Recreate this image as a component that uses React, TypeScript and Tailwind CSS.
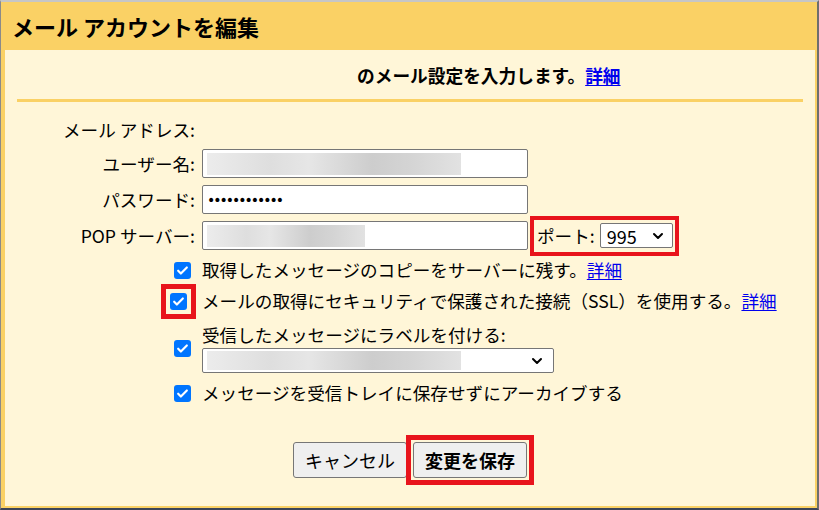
import React from 'react';
import { ChevronDown } from 'lucide-react';

const font = { fontFamily: '"Noto Sans CJK JP", "Noto Sans", sans-serif' };

const Check: React.FC = () => (
    <div className="w-[17px] h-[17px] rounded-[3px] bg-[#0075ff] flex items-center justify-center">
        <svg width="13" height="13" viewBox="0 0 24 24" fill="none" stroke="white" strokeWidth="4" strokeLinecap="round" strokeLinejoin="round">
            <path d="M4 12.5l5 5L20 6.5" />
        </svg>
    </div>
);

const Blur: React.FC<{ w: string; h: string }> = ({ w, h }) => (
    <div className={`${w} ${h} bg-[linear-gradient(90deg,#ececec,#dedede_25%,#e6e6e6_40%,#cdcdcd_65%,#d4d4d4_80%,#e2e2e2)]`} />
);

const Link: React.FC<{ children: React.ReactNode }> = ({ children }) => (
    <a href="#" className="text-[#0000ee] underline underline-offset-2">{children}</a>
);

const FieldRow: React.FC<{ label: React.ReactNode; className?: string; children: React.ReactNode }> = ({ label, className = '', children }) => (
    <div className={`flex items-center ${className}`}>
        <div className="w-[190px] flex justify-end">{label}</div>
        <div className="ml-[7px] flex items-center">{children}</div>
    </div>
);

const Box: React.FC<{ w: string; h?: string; children?: React.ReactNode }> = ({ w, h = 'h-[29px]', children }) => (
    <div className={`${w} ${h} bg-white border border-[#767676] rounded-[2px] flex items-center px-[4px]`}>{children}</div>
);

export default function App() {
    return (
        <div
            className="w-[819px] h-[510px] bg-[#fad165] border-t-2 border-t-[#c6c6c6] border-l border-l-[#8a8a8a] border-r-2 border-r-[#6e6e6e] border-b-2 border-b-[#3c4458] flex flex-col text-black overflow-hidden"
            style={font}
        >
            <header className="h-[48px] flex items-center pl-[11px]">
                <h1 className="text-[22px] font-bold leading-none">メール アカウントを編集</h1>
            </header>
            <div className="flex-1 ml-[4px] mr-[2px] mb-[2px] bg-[#fff6d8] text-[17.6px] leading-[24px]">
                <p className="pt-[13px] pl-[352px] font-bold text-[17.7px]">
                    のメール設定を入力します。<Link>詳細</Link>
                </p>
                <div className="mt-[12px] mx-[12px] h-[3px] bg-[#fad165]" />

                <FieldRow className="mt-[15px] h-[26px]" label={<span>メール アドレス:</span>}>
                    <span />
                </FieldRow>
                <FieldRow className="mt-[6px] h-[29px]" label={<span>ユーザー名:</span>}>
                    <Box w="w-[326px]">
                        <Blur w="w-[254px]" h="h-[22px]" />
                    </Box>
                </FieldRow>
                <FieldRow className="mt-[7px] h-[29px]" label={<span>パスワード:</span>}>
                    <Box w="w-[326px]">
                        <span className="text-[14px] tracking-[-2px] leading-none" style={{ fontFamily: '"DejaVu Sans", sans-serif' }}>••••••••••••</span>
                    </Box>
                </FieldRow>
                <FieldRow className="mt-[7px] h-[29px]" label={<span>POP サーバー:</span>}>
                    <Box w="w-[326px]">
                        <Blur w="w-[158px]" h="h-[22px]" />
                    </Box>
                    <div className="ml-[2px] h-[40px] border-[4px] border-[#e8141c] flex items-center pl-[3px] pr-[2px]">
                        <span>ポート:</span>
                        <div className="ml-[5px] w-[73px] h-[25px] bg-white border border-[#767676] rounded-[2px] flex items-center justify-between pl-[6px] pr-[6px]">
                            <span className="text-[18px]">995</span>
                            <ChevronDown size={16} strokeWidth={3} />
                        </div>
                    </div>
                </FieldRow>

                <FieldRow className="mt-[6px] h-[28px]" label={<div className="mr-[4px]"><Check /></div>}>
                    <span>取得したメッセージのコピーをサーバーに残す。<Link>詳細</Link></span>
                </FieldRow>
                <FieldRow
                    className="mt-[3px] h-[28px]"
                    label={
                        <div className="-mr-[1px] border-[5px] border-[#e8141c] p-[4px]">
                            <Check />
                        </div>
                    }
                >
                    <span className="whitespace-nowrap">メールの取得にセキュリティで保護された接続（SSL）を使用する。<Link>詳細</Link></span>
                </FieldRow>
                <FieldRow className="mt-[8px] h-[50px]" label={<div className="mr-[4px]"><Check /></div>}>
                    <div className="flex flex-col">
                        <span className="h-[24px]">受信したメッセージにラベルを付ける:</span>
                        <div className="mt-[1px] w-[352px] h-[25px] bg-white border border-[#767676] rounded-[2px] flex items-center justify-between pl-[4px] pr-[8px]">
                            <Blur w="w-[254px]" h="h-[19px]" />
                            <ChevronDown size={16} strokeWidth={3} />
                        </div>
                    </div>
                </FieldRow>
                <FieldRow className="mt-[6px] h-[28px]" label={<div className="mr-[4px]"><Check /></div>}>
                    <span>メッセージを受信トレイに保存せずにアーカイブする</span>
                </FieldRow>

                <div className="mt-[35px] h-[36px] flex items-center pl-[288px]">
                    <button className="w-[114px] h-[36px] bg-[#efefef] border border-[#767676] rounded-[3px] text-[18px]">キャンセル</button>
                    <div className="-ml-[1px] border-[5px] border-[#e8141c] p-[2px]">
                        <button className="w-[114px] h-[36px] bg-[#efefef] border border-[#767676] rounded-[3px] text-[18px] font-bold">変更を保存</button>
                    </div>
                </div>
            </div>
        </div>
    );
}
